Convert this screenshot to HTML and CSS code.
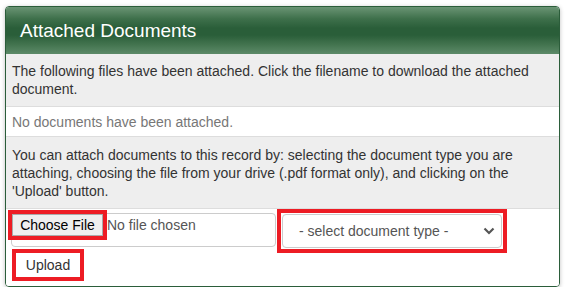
FILE: index.html
```html
<!DOCTYPE html>
<html>
<head>
<meta charset="utf-8">
<link rel="stylesheet" href="styles.css">
</head>
<body>
<div class="panel">
  <div class="panel-heading">Attached Documents</div>
  <div class="row row-grey row-first">The following files have been attached. Click the filename to download the attached document.</div>
  <div class="row row-empty">No documents have been attached.</div>
  <div class="row row-grey row-info">You can attach documents to this record by: selecting the document type you are attaching, choosing the file from your drive (.pdf format only), and clicking on the 'Upload' button.</div>
  <div class="row row-form">
    <div class="controls">
      <div class="file-control">
        <button class="choose-btn hl" type="button">Choose File</button>
        <span class="file-status">No file chosen</span>
      </div>
      <div class="select-wrap">
        <div class="select-control">
          <span>- select document type -</span>
          <svg class="chev" width="12" height="8" viewBox="0 0 12 8"><path d="M1.5 1.5 L6 6 L10.5 1.5" fill="none" stroke="#555" stroke-width="2.2"/></svg>
        </div>
      </div>
    </div>
    <div class="upload-row">
      <button class="upload-btn hl" type="button">Upload</button>
    </div>
  </div>
</div>
</body>
</html>
```

FILE: styles.css
```css
html, body {
  margin: 0;
  padding: 0;
  background: #fff;
}
body {
  font-family: "Liberation Sans", Arial, sans-serif;
  font-size: 14px;
  color: #333;
}
.panel {
  box-sizing: border-box;
  width: 555px;
  margin: 6px 0 0 5px;
  border: 1px solid #2b5d3a;
  border-radius: 4px;
  box-shadow: 0 1px 4px rgba(0,0,0,0.25);
  overflow: hidden;
}
.panel-heading {
  height: 47px;
  box-sizing: border-box;
  padding: 13px 14px;
  font-size: 19px;
  line-height: 21px;
  color: #fff;
  background: linear-gradient(#6a9474 0%, #3e704b 25%, #2a5e39 45%, #2a5e39 60%, #43744f 80%, #5c8a68 100%);
}
.row {
  line-height: 18px;
  border-top: 1px solid #ddd;
}
.row-grey {
  background: #eee;
}
.row-first {
  border-top: none;
  padding: 8px 6px;
}
.row-empty {
  padding: 6px 6px 5px;
  color: #777;
  background: #fff;
}
.row-info {
  padding: 9px 6px 8px;
}
.row-form {
  padding: 4px 5px 9px 6px;
  background: #fff;
}
.controls {
  display: flex;
  gap: 6px;
  align-items: flex-start;
}
.hl {
  outline: 4px solid #ed1c24;
}
.file-control {
  box-sizing: border-box;
  width: 265px;
  height: 34px;
  border: 1px solid #ccc;
  border-radius: 4px;
  display: flex;
  align-items: flex-start;
  margin-left: -1px;
}
.choose-btn {
  box-sizing: border-box;
  height: 22px;
  width: 91px;
  margin: 0;
  padding: 0 6px;
  font-family: "Liberation Sans", Arial, sans-serif;
  font-size: 14px;
  color: #000;
  background: #efefef;
  border: 1px solid #aaa;
  border-radius: 0;
}
.file-status {
  margin-left: 4px;
  line-height: 22px;
  color: #555;
}
.select-wrap {
  margin: -4px 0 -5px -5px;
  border: 4px solid #ed1c24;
  padding: 1px;
}
.select-control {
  box-sizing: border-box;
  width: 220px;
  height: 34px;
  border: 1px solid #ccc;
  border-radius: 4px;
  display: flex;
  align-items: center;
  justify-content: space-between;
  padding: 0 6px 0 16px;
  color: #555;
}
.chev {
  display: block;
}
.upload-row {
  margin-top: 5px;
  padding-left: 4px;
}
.upload-btn {
  box-sizing: border-box;
  width: 64px;
  height: 24px;
  margin: 0;
  padding: 0;
  font-family: "Liberation Sans", Arial, sans-serif;
  font-size: 14px;
  color: #333;
  background: #fff;
  border: none;
  display: block;
}
```
